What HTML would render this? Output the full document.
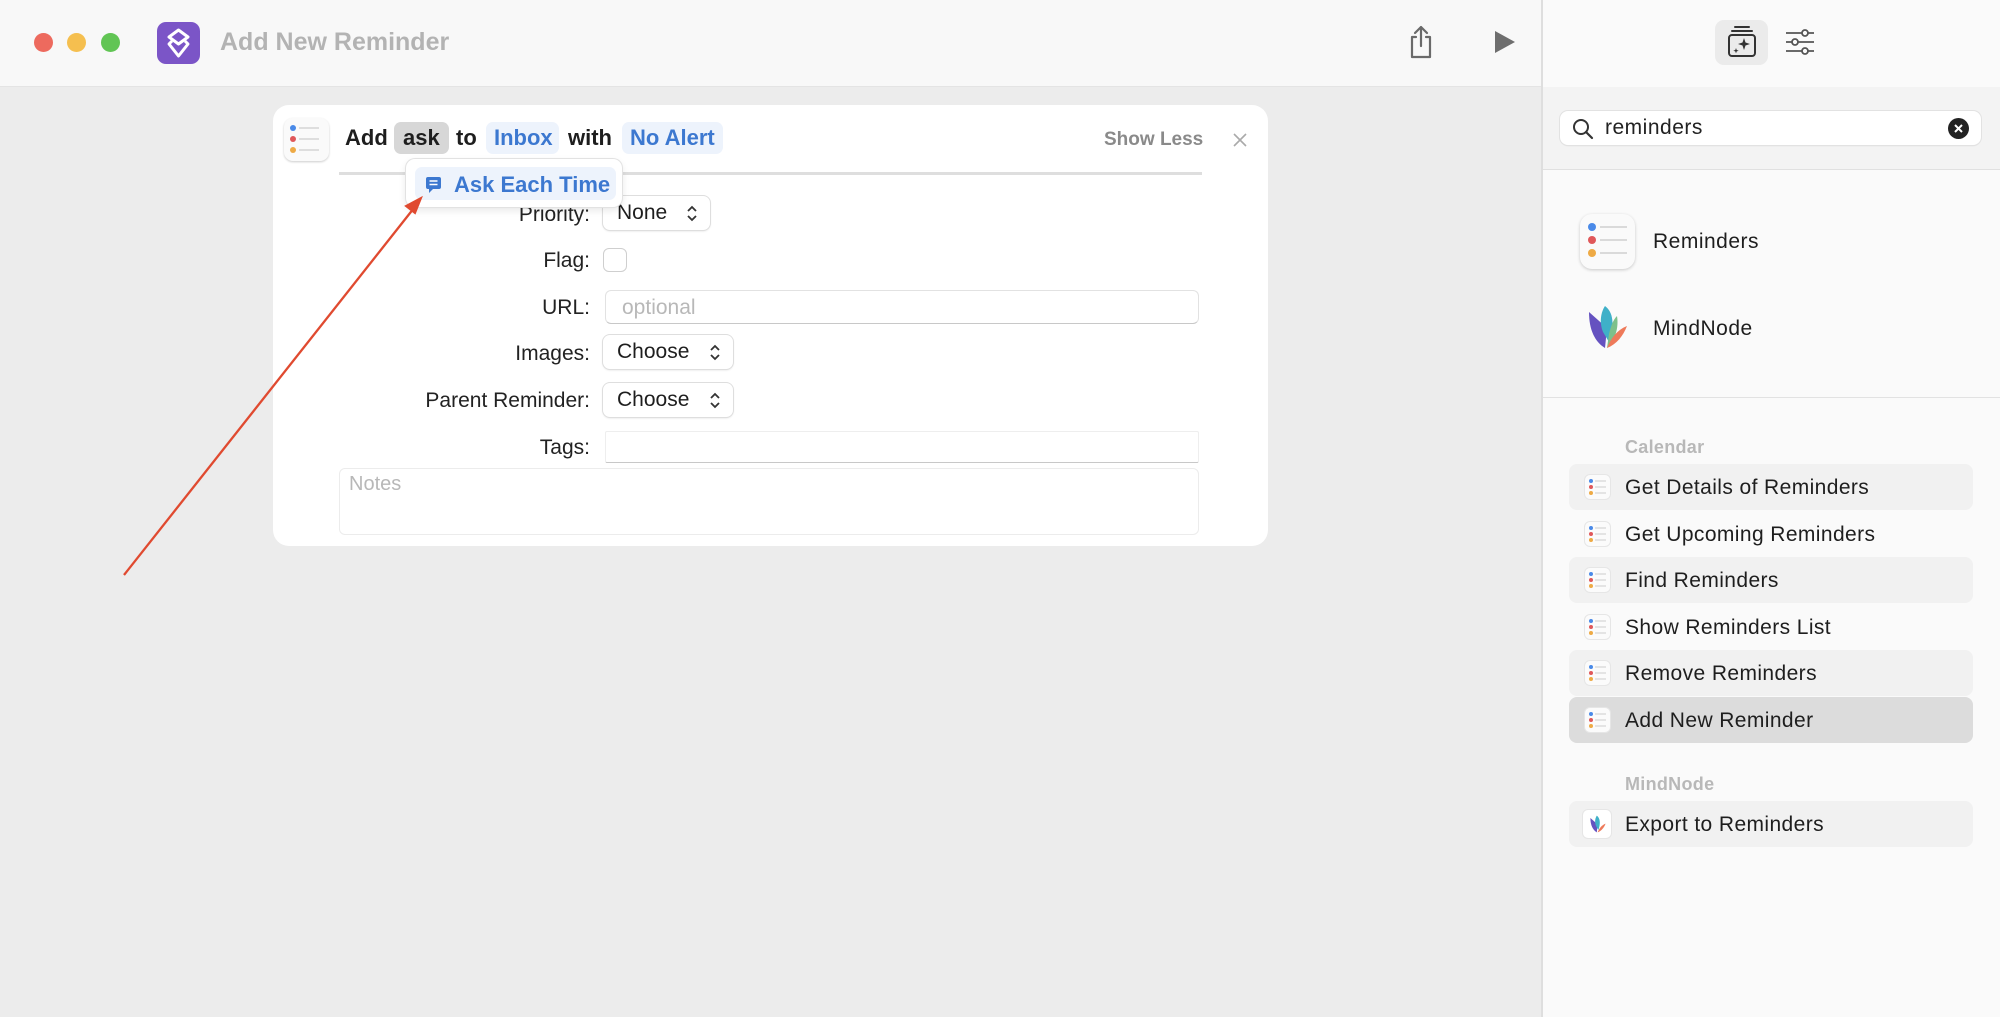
<!DOCTYPE html>
<html><head><meta charset="utf-8"><style>
*{margin:0;padding:0;box-sizing:border-box}
body{width:2000px;height:1017px;overflow:hidden;background:#ececec;font-family:"Liberation Sans",sans-serif;position:relative;color:#1e1e1e}
.a{position:absolute}
.t{position:absolute;white-space:nowrap;line-height:1}
.lab{position:absolute;right:1410px;font-size:21px;color:#222;text-align:right;white-space:nowrap}
.pop{position:absolute;background:#fff;border-radius:7px;box-shadow:0 0 0 1px #dedede,0 1px 2px rgba(0,0,0,.15);font-size:21px;padding-left:14px;line-height:34px}
.pop svg{position:absolute;right:12px;top:9px}
.fld{position:absolute;background:#fff;border:1px solid #e2e2e2;border-bottom-color:#c8c8c8;border-radius:6px}
.row{position:absolute;left:1569px;width:404px;height:46px;border-radius:8px}
.row .ic{position:absolute;left:16px;top:11px;width:25px;height:24px;border-radius:5px;background:#fbfbfb;box-shadow:0 0 0 1px #e6e6e6}
.row span{position:absolute;left:56px;top:12px;font-size:21px;letter-spacing:0.4px;color:#1e1e1e;white-space:nowrap}
.hd{position:absolute;left:1625px;font-size:18px;font-weight:bold;color:#b8b8b8;letter-spacing:0.3px}
</style></head><body>
<div class="a" style="left:0;top:0;width:1541px;height:87px;background:#f8f8f8;border-bottom:1px solid #e4e4e4"></div>
<div class="a" style="left:1541px;top:0;width:459px;height:1017px;background:#fafafa;border-left:2px solid #dedede"></div>
<div class="a" style="left:1543px;top:87px;width:457px;height:83px;background:#f3f3f3;border-bottom:1px solid #e0e0e0"></div>
<div class="a" style="left:1543px;top:397px;width:457px;height:1px;background:#e2e2e2"></div>
<div class="a" style="left:34px;top:33px;width:19px;height:19px;border-radius:50%;background:#ed6a5e"></div>
<div class="a" style="left:67px;top:33px;width:19px;height:19px;border-radius:50%;background:#f5bf4f"></div>
<div class="a" style="left:101px;top:33px;width:19px;height:19px;border-radius:50%;background:#61c554"></div>
<div class="a" style="left:157px;top:22px;width:43px;height:42px;border-radius:9px;background:#7b55c7"></div>
<svg class="a" style="left:157px;top:22px" width="43" height="42" viewBox="0 0 43 42"><g fill="none" stroke="#fff" stroke-width="3" stroke-linejoin="round"><path d="M21.5 8 L31 15 L21.5 22 L12 15Z"/><path d="M15 19 L12 22 L21.5 34 L31 22 L28 19"/></g></svg>
<div class="t" style="left:220px;top:30px;font-size:25px;font-weight:bold;color:#b3b3b3">Add New Reminder</div>
<svg class="a" style="left:1407px;top:24px" width="28" height="36" viewBox="0 0 28 36"><g fill="none" stroke="#6a6a6a" stroke-width="2.2" stroke-linecap="round" stroke-linejoin="round"><path d="M9 13H5v20h18V13h-4"/><path d="M14 3v19M8 9l6-6 6 6"/></g></svg>
<svg class="a" style="left:1494px;top:30px" width="22" height="24" viewBox="0 0 22 24"><path d="M1 1L21 12 1 23Z" fill="#6e6e6e"/></svg>
<div class="a" style="left:1715px;top:20px;width:53px;height:45px;border-radius:9px;background:#ebebeb"></div>
<svg class="a" style="left:1726px;top:24px" width="32" height="36" viewBox="0 0 32 36"><g fill="none" stroke="#333" stroke-width="2" stroke-linecap="round"><path d="M9 3h14M6 7h20"/><rect x="3" y="11" width="26" height="21" rx="3"/></g><path d="M18 14l1.5 4.5L24 20l-4.5 1.5L18 26l-1.5-4.5L12 20l4.5-1.5Z M10 24l.7 2 2 .7-2 .7-.7 2-.7-2-2-.7 2-.7Z" fill="#333"/></svg>
<svg class="a" style="left:1785px;top:28px" width="30" height="28" viewBox="0 0 30 28"><g fill="none" stroke="#555" stroke-width="1.8"><path d="M1 5h16M23 5h6M1 14h6M13 14h16M1 23h16M23 23h6"/><circle cx="20" cy="5" r="3"/><circle cx="10" cy="14" r="3"/><circle cx="20" cy="23" r="3"/></g></svg>

<div class="a" style="left:273px;top:105px;width:995px;height:441px;background:#fff;border-radius:16px"></div>
<div class="a" style="left:284px;top:118px;width:45px;height:43px;border-radius:9px;background:#fafafa;box-shadow:0 1px 2px rgba(0,0,0,.2)"></div>
<svg class="a" style="left:284px;top:118px" width="45" height="43"><circle cx="9" cy="10" r="3" fill="#4a8ae8"/><circle cx="9" cy="21" r="3" fill="#e0585a"/><circle cx="9" cy="32" r="3" fill="#eeaa45"/><path d="M15 10h20M15 21h20M15 32h20" stroke="#d4d4d4" stroke-width="1.5"/></svg>
<div class="t" style="left:345px;top:127px;font-size:22px;font-weight:bold">Add</div>
<div class="a" style="left:394px;top:122px;width:55px;height:32px;border-radius:7px;background:#d7d7d7"></div>
<div class="t" style="left:403px;top:127px;font-size:22px;font-weight:bold">ask</div>
<div class="t" style="left:456px;top:127px;font-size:22px;font-weight:bold">to</div>
<div class="a" style="left:486px;top:122px;width:73px;height:32px;border-radius:7px;background:#edf3fc"></div>
<div class="t" style="left:494px;top:127px;font-size:22px;font-weight:bold;color:#3c78d0">Inbox</div>
<div class="t" style="left:568px;top:127px;font-size:22px;font-weight:bold">with</div>
<div class="a" style="left:622px;top:122px;width:101px;height:32px;border-radius:7px;background:#edf3fc"></div>
<div class="t" style="left:630px;top:127px;font-size:22px;font-weight:bold;color:#3c78d0">No Alert</div>
<div class="t" style="left:1104px;top:130px;font-size:19px;font-weight:bold;color:#8a8a8a">Show Less</div>
<svg class="a" style="left:1232px;top:132px" width="16" height="16"><path d="M2 2L14 14M14 2L2 14" stroke="#aaa" stroke-width="1.6"/></svg>
<div class="a" style="left:339px;top:172px;width:863px;height:3px;background:#dedede"></div>

<div class="lab" style="top:203px">Priority:</div>
<div class="pop" style="left:603px;top:196px;width:107px;height:34px">None<svg width="12" height="17"><path d="M2 6l4-4 4 4M2 11l4 4 4-4" fill="none" stroke="#333" stroke-width="1.8"/></svg></div>
<div class="lab" style="top:249px">Flag:</div>
<div class="a" style="left:603px;top:248px;width:24px;height:24px;border:1px solid #cfcfcf;border-radius:6px;background:#fff"></div>
<div class="lab" style="top:296px">URL:</div>
<div class="fld" style="left:605px;top:290px;width:594px;height:34px"></div>
<div class="t" style="left:622px;top:297px;font-size:21px;color:#b8b8b8">optional</div>
<div class="lab" style="top:342px">Images:</div>
<div class="pop" style="left:603px;top:335px;width:130px;height:34px">Choose<svg width="12" height="17"><path d="M2 6l4-4 4 4M2 11l4 4 4-4" fill="none" stroke="#333" stroke-width="1.8"/></svg></div>
<div class="lab" style="top:389px">Parent Reminder:</div>
<div class="pop" style="left:603px;top:383px;width:130px;height:34px">Choose<svg width="12" height="17"><path d="M2 6l4-4 4 4M2 11l4 4 4-4" fill="none" stroke="#333" stroke-width="1.8"/></svg></div>
<div class="lab" style="top:436px">Tags:</div>
<div class="fld" style="left:605px;top:431px;width:594px;height:32px;border-radius:2px;border-color:#eee #eee #c8c8c8"></div>
<div class="fld" style="left:339px;top:468px;width:860px;height:67px;border-color:#ececec"></div>
<div class="t" style="left:349px;top:474px;font-size:20px;color:#b8b8b8">Notes</div>

<div class="a" style="left:406px;top:159px;width:216px;height:48px;background:#fff;border-radius:9px;box-shadow:0 0 0 1px #e2e2e2,0 3px 8px rgba(0,0,0,.1)"></div>
<div class="a" style="left:415px;top:167px;width:201px;height:33px;border-radius:7px;background:#edf3fc"></div>
<svg class="a" style="left:425px;top:176px" width="17" height="18"><path d="M3 1h11a2 2 0 0 1 2 2v8a2 2 0 0 1-2 2H8l-4 4v-4H3a2 2 0 0 1-2-2V3a2 2 0 0 1 2-2Z" fill="#3c78d0"/><path d="M4.5 5h8M4.5 8.5h8" stroke="#fff" stroke-width="1.5"/></svg>
<div class="t" style="left:454px;top:174px;font-size:22px;font-weight:bold;color:#3c78d0">Ask Each Time</div>

<svg class="a" style="left:0;top:0" width="600" height="600"><line x1="124" y1="575" x2="414" y2="208" stroke="#e04a30" stroke-width="2.3"/><path d="M421 198L406 206 415 213Z" fill="#e04a30" stroke="#e04a30" stroke-width="2"/></svg>

<div class="a" style="left:1560px;top:111px;width:421px;height:34px;background:#fff;border-radius:8px;box-shadow:0 0 0 1px #e2e2e2,0 1px 1px rgba(0,0,0,.12)"></div>
<svg class="a" style="left:1571px;top:117px" width="24" height="24"><circle cx="10" cy="10" r="7" fill="none" stroke="#333" stroke-width="2"/><path d="M15 15l6 6" stroke="#333" stroke-width="2.2" stroke-linecap="round"/></svg>
<div class="t" style="left:1605px;top:117px;font-size:21px;letter-spacing:0.5px;color:#222">reminders</div>
<div class="a" style="left:1948px;top:118px;width:21px;height:21px;border-radius:50%;background:#222"></div>
<svg class="a" style="left:1948px;top:118px" width="21" height="21"><path d="M7 7l7 7M14 7l-7 7" stroke="#fff" stroke-width="2"/></svg>

<div class="a" style="left:1580px;top:214px;width:55px;height:55px;border-radius:12px;background:#fafafa;box-shadow:0 1px 3px rgba(0,0,0,.2)"></div>
<svg class="a" style="left:1580px;top:214px" width="55" height="55"><circle cx="12" cy="13" r="4" fill="#4a8ae8"/><circle cx="12" cy="26" r="4" fill="#e0585a"/><circle cx="12" cy="39" r="4" fill="#eeaa45"/><path d="M20 13h27M20 26h27M20 39h27" stroke="#cfcfcf" stroke-width="1.6"/></svg>
<div class="t" style="left:1653px;top:231px;font-size:21px;letter-spacing:0.5px">Reminders</div>
<svg class="a" style="left:1585px;top:302px" width="46" height="50" viewBox="0 0 46 50"><path d="M4 10 L22 26 L20 46 C10 40 4 28 4 10Z" fill="#6552c0"/><path d="M20 4 C28 10 30 22 24 40 L18 30 C14 20 16 10 20 4Z" fill="#3fb0c8"/><path d="M32 14 C34 26 30 38 22 46 L24 32 C26 24 28 18 32 14Z" fill="#7dc08a"/><path d="M42 24 C38 34 32 42 22 46 C26 36 32 28 42 24Z" fill="#ee7a5a"/></svg>
<div class="t" style="left:1653px;top:318px;font-size:21px;letter-spacing:0.5px">MindNode</div>

<div class="hd" style="top:437px">Calendar</div>
<div class="row" style="top:464px;background:#f1f1f1"><div class="ic"></div><span>Get Details of Reminders</span></div>
<div class="row" style="top:511px"><div class="ic"></div><span>Get Upcoming Reminders</span></div>
<div class="row" style="top:557px;background:#f1f1f1"><div class="ic"></div><span>Find Reminders</span></div>
<div class="row" style="top:604px"><div class="ic"></div><span>Show Reminders List</span></div>
<div class="row" style="top:650px;background:#f1f1f1"><div class="ic"></div><span>Remove Reminders</span></div>
<div class="row" style="top:697px;background:#dcdcdc"><div class="ic"></div><span>Add New Reminder</span></div>
<div class="hd" style="top:774px">MindNode</div>
<div class="row" style="top:801px;background:#f1f1f1"><div class="ic" style="width:28px;height:28px;top:9px;left:14px;background:#fff"></div><span>Export to Reminders</span></div>
<svg class="a" style="left:1587px;top:814px" width="22" height="20" viewBox="0 0 46 50"><path d="M4 10 L22 26 L20 46 C10 40 4 28 4 10Z" fill="#6552c0"/><path d="M20 4 C28 10 30 22 24 40 L18 30 C14 20 16 10 20 4Z" fill="#3fb0c8"/><path d="M42 24 C38 34 32 42 22 46 C26 36 32 28 42 24Z" fill="#ee7a5a"/></svg>
<svg class="a" style="left:1585px;top:475px" width="25" height="260">
<g id="ri"><circle cx="6" cy="6" r="2" fill="#4a8ae8"/><circle cx="6" cy="12" r="2" fill="#e0585a"/><circle cx="6" cy="18" r="2" fill="#eeaa45"/><path d="M10 6h11M10 12h11M10 18h11" stroke="#ccc" stroke-width="1"/></g>
<use href="#ri" y="47"/><use href="#ri" y="93"/><use href="#ri" y="140"/><use href="#ri" y="186"/><use href="#ri" y="233"/></svg>
</body></html>
